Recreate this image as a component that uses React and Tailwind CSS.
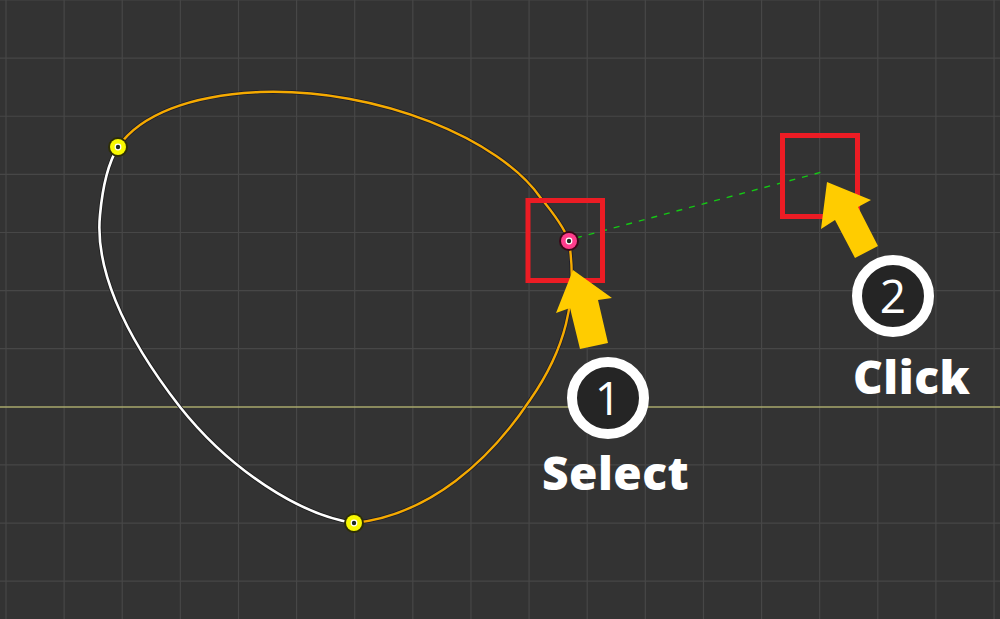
const STEP = 58.12;
const xs = Array.from({ length: 18 }, (_, i) => 6 + i * STEP);
const ys = Array.from({ length: 11 }, (_, i) => i * STEP);

function Grid() {
  return (
    <g>
      {xs.map((x) => (
        <line key={"x" + x} x1={x} y1="0" x2={x} y2="619" stroke="#474747" strokeWidth="1.2" />
      ))}
      {ys.map((y) =>
        Math.round(y) === 407 ? null : (
          <line key={"y" + y} x1="0" y1={y} x2="1000" y2={y} stroke="#474747" strokeWidth="1.2" />
        )
      )}
      <line x1="0" y1="407" x2="1000" y2="407" stroke="#a9a86c" strokeWidth="1.3" />
    </g>
  );
}

function Point({ x, y, fill, ring }) {
  return (
    <g>
      <circle cx={x} cy={y} r="10" fill={ring} />
      <circle cx={x} cy={y} r="8" fill={fill} />
      <circle cx={x} cy={y} r="3.4" fill="#ffffff" />
      <circle cx={x} cy={y} r="2.2" fill="#1e2a1e" />
    </g>
  );
}

// numbered step marker with its caption underneath
function Step({ n, label, className, labelClass }) {
  return (
    <div className={"absolute flex flex-col items-start " + className}>
      <div className="w-[82px] h-[82px] rounded-full border-[10px] border-white bg-[#252525] flex items-center justify-center text-white text-[46px] leading-none font-medium font-['Open_Sans',sans-serif]">
        <span className="-mt-[3px]">{n}</span>
      </div>
      <div
        className={
          "text-white font-extrabold text-[46px] leading-[56px] tracking-[0.5px] font-['Open_Sans',sans-serif] " +
          labelClass
        }
      >
        {label}
      </div>
    </div>
  );
}

export default function App() {
  return (
    <div className="relative w-[1000px] h-[619px] bg-[#333333] overflow-hidden">
      <svg className="absolute inset-0" width="1000" height="619" viewBox="0 0 1000 619">
        <Grid />

        {/* orange spline */}
        <path
          d="M118,147 C140,115 190,95 260,92 C380,88 500,140 540,197 C555,215 565,230 569,241 C578,300 565,350 530,400 C490,460 430,515 354,523"
          fill="none"
          stroke="#1c1c2a"
          strokeWidth="4"
        />
        <path
          d="M118,147 C140,115 190,95 260,92 C380,88 500,140 540,197 C555,215 565,230 569,241 C578,300 565,350 530,400 C490,460 430,515 354,523"
          fill="none"
          stroke="#f5aa00"
          strokeWidth="2.4"
        />
        {/* white segment */}
        <path
          d="M354,523 C300,515 230,470 180,407 C120,330 95,265 100,215 C103,182 110,160 118,147"
          fill="none"
          stroke="#1c1c1c"
          strokeWidth="4.2"
        />
        <path
          d="M354,523 C300,515 230,470 180,407 C120,330 95,265 100,215 C103,182 110,160 118,147"
          fill="none"
          stroke="#ffffff"
          strokeWidth="2.6"
        />

        {/* guide line */}
        <line x1="576" y1="238" x2="822" y2="172" stroke="#14c814" strokeWidth="1.4" strokeDasharray="6 7" />

        <Point x={118} y={147} fill="#f8f800" ring="#2e2e06" />
        <Point x={354} y={523} fill="#f8f800" ring="#2e2e06" />
        <Point x={569} y={241} fill="#ff3d8c" ring="#3a0818" />

        {/* red frames */}
        <rect x="528" y="200.5" width="74.5" height="80" fill="none" stroke="#ec1c24" strokeWidth="5" />
        <rect x="782.5" y="135.5" width="75" height="81" fill="none" stroke="#ec1c24" strokeWidth="5" />

        {/* arrows */}
        <polygon points="573,270 612,298 598,300 608,343 580,349 570,308 556,313" fill="#ffcc00" />
        <polygon points="827,182 871,200 858,207 878,246 855,258 835,220 821,229" fill="#ffcc00" />
      </svg>

      <Step n="1" label="Select" className="left-[567px] top-[357px]" labelClass="mt-[5px] -ml-[25px]" />
      <Step n="2" label="Click" className="left-[852px] top-[255px]" labelClass="mt-[11px] ml-[1px]" />
    </div>
  );
}
